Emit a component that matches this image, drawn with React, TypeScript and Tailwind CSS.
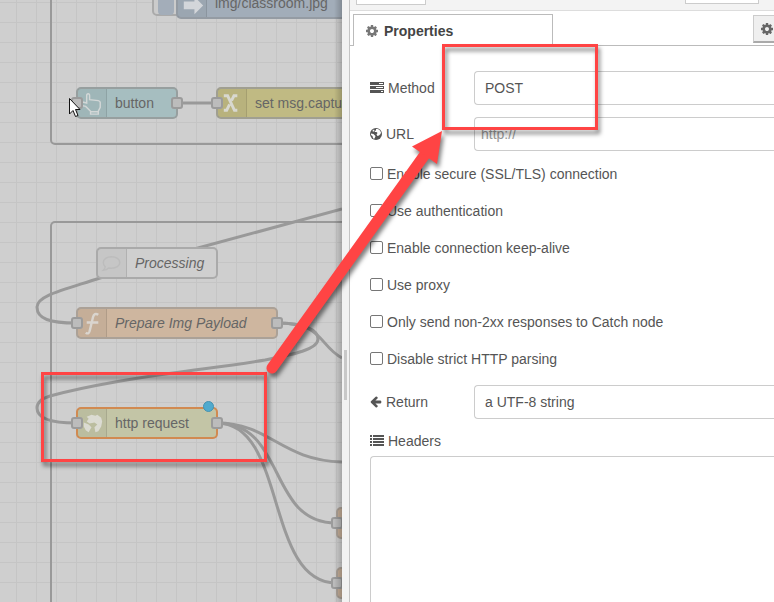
import type { ReactNode } from "react";

const COG =
  "M1024 896q0-106-75-181t-181-75-181 75-75 181 75 181 181 75 181-75 75-181zm512-109v222q0 12-8 23t-20 13l-185 28q-19 54-39 91 35 50 107 138 10 12 10 25t-9 23q-27 37-99 108t-94 71q-12 0-26-9l-138-108q-44 23-91 38-16 136-29 186-7 28-36 28h-222q-14 0-24.5-8.5t-11.5-21.5l-28-184q-49-16-90-37l-141 107q-10 9-25 9-14 0-25-11-126-114-165-168-7-10-7-23 0-12 8-23 15-21 51-66.5t54-70.5q-27-50-41-99l-183-27q-13-2-21-12.5t-8-23.5v-222q0-12 8-23t19-13l186-28q14-46 39-92-40-57-107-138-10-12-10-24 0-10 9-23 26-36 98.5-107.5t94.5-71.5q13 0 26 10l138 107q44-23 91-38 16-136 29-186 7-28 36-28h222q14 0 24.5 8.5t11.5 21.5l28 184q49 16 90 37l142-107q9-9 24-9 13 0 25 10 129 119 165 170 7 8 7 22 0 12-8 23-15 21-51 66.5t-54 70.5q26 50 41 98l183 28q13 2 21 12.5t8 23.5z";

function CogIcon({ className }: { className: string }) {
  return (
    <svg viewBox="0 128 1536 1536" className={className} fill="currentColor" aria-hidden="true">
      <path d={COG} />
    </svg>
  );
}

function TasksIcon() {
  return (
    <svg viewBox="0 0 14 12" className="h-3 w-3.5 shrink-0" fill="currentColor" fillRule="evenodd" aria-hidden="true">
      <path d="M0 0h14v3H0zM9 1h4v1H9zM0 4h14v3H0zM6 5h7v1H6zM0 8h14v3H0zM11 9h2v1h-2z" />
    </svg>
  );
}

function ListIcon() {
  return (
    <svg viewBox="0 0 14 12" className="h-3 w-3.5 shrink-0" fill="currentColor" aria-hidden="true">
      <path d="M0 0h2v2H0zM3 0h11v2H3zM0 3h2v2H0zM3 3h11v2H3zM0 6h2v2H0zM3 6h11v2H3zM0 9h2v2H0zM3 9h11v2H3z" />
    </svg>
  );
}

function GlobeIcon() {
  return (
    <svg viewBox="0 0 24 24" className="size-3 shrink-0" aria-hidden="true">
      <circle cx="12" cy="12" r="12" fill="#555" />
      <path d="M12 2l4 0 4 3 2 4-1 3-3 3-3 1-2-3 2-3-2-2-3 0-1-2 3-1z" fill="#fff" />
      <path d="M2 11l5 1 4 4-1 3-2 3-2-2-1-4-3-2z" fill="#fff" />
      <path d="M5 5l3-2 1 2-3 3z" fill="#fff" />
    </svg>
  );
}

function ArrowLeftIcon() {
  return (
    <svg viewBox="0 128 1600 1664" className="size-3 shrink-0" fill="currentColor" aria-hidden="true">
      <path d="M1536 896v128q0 53-32.5 90.5t-84.5 37.5h-704l293 294q38 36 38 90t-38 90l-75 76q-37 37-90 37-52 0-91-37l-651-652q-37-37-37-90 0-52 37-91l651-650q38-38 91-38 52 0 90 38l75 74q38 38 38 91t-38 91l-293 293h704q52 0 84.5 37.5t32.5 90.5z" />
    </svg>
  );
}

/* Glyphs shown in the icon strip of each flow node */
const glyph = {
  hand: (
    <path
      d="M8 14V8q0-2 1.500-2T11 8v4l9 1q2 .5 2 2v5l-2 4v3h-8v-3L7 19l-5-1q-2-1.500-.5-3L4 14.500l4 1zM12 24.500h8"
      transform="translate(1 -1)"
      fill="none"
      stroke="#d3d7d7"
      strokeWidth="1.500"
    />
  ),
  change: (
    <path
      d="M6 7h4l7 15h3M6 22h3l3-6M14 12l2.500-5H20"
      fill="none"
      stroke="#d8d8d0"
      strokeWidth="3"
    />
  ),
  inject: <path d="M6 13h11V8l9 9-9 9v-5H6zM6 7h11v3H6z" fill="#d3d6da" />,
  comment: (
    <path
      d="M14 8c5 0 8.500 2.500 8.500 6s-3.500 6-8.500 6l-3-.4q-2 2-5.500 2.400 1.500-1.500 2-3.500Q5.500 16.500 5.500 14c0-3.500 3.500-6 8.500-6z"
      fill="none"
      stroke="#bcbcbc"
      strokeWidth="1.500"
    />
  ),
  func: (
    <path
      d="M21 6q-4-2.500-5.500 2.500L12 23q-1 3.500-4 1.500M9 14h12"
      fill="none"
      stroke="#dad5cf"
      strokeWidth="2.500"
    />
  ),
  globe: (
    <path
      d="M9 8l5-2 4 1 2-1 4 3 1 4-1 5-3 5-3 1-1-5 3-3-3-2-5 1-3-2 2-3zM6 14l5 2 3 3-3 5-3-2-2-4z"
      fill="#dbdbd2"
    />
  ),
};

function Port({ className }: { className: string }) {
  return <span className={`absolute size-3 rounded-[3px] border-2 border-[#9b9b9b] bg-[#bcbcbc] ${className}`} />;
}

type NodeProps = {
  place: string;
  tone: string;
  icon?: ReactNode;
  label?: string;
  input?: boolean;
  output?: boolean;
  children?: ReactNode;
};

function FlowNode({ place, tone, icon, label, input, output, children }: NodeProps) {
  return (
    <div className={`absolute flex h-8 items-stretch rounded-[5px] border-2 ${place} ${tone}`}>
      <div className="w-[29px] shrink-0 border-r border-black/10 bg-black/4">
        <svg viewBox="0 0 30 30" className="size-[29px]" aria-hidden="true">
          {icon}
        </svg>
      </div>
      <span className="self-center pl-2 text-sm whitespace-nowrap text-[#666]">{label}</span>
      {input && <Port className="top-2 -left-[7px]" />}
      {output && <Port className="top-2 -right-[7px]" />}
      {children}
    </div>
  );
}

function Workspace() {
  return (
    <main className="relative w-[342px] shrink-0 overflow-hidden bg-[#cfcfcf]">
      <svg className="absolute inset-0 size-full" aria-hidden="true">
        <defs>
          <pattern id="grid" x="16" y="2" width="20" height="20" patternUnits="userSpaceOnUse">
            <path d="M.5 0v20M0 .5h20" stroke="#c5c5c5" />
          </pattern>
        </defs>
        <rect width="100%" height="100%" fill="url(#grid)" />
        <g fill="none" stroke="#999" strokeWidth="2">
          <rect x="51" y="-60" width="500" height="204" rx="4" />
          <rect x="51" y="222" width="500" height="500" rx="4" />
        </g>
        <g fill="none" stroke="#999" strokeWidth="3">
          <path d="M177 103H217" />
          <path d="M342 209L198 248L100 278C60 291 37 296 37 307C37 319 50 323 76 323" />
          <path d="M277 323C305 323 318 330 318 339C318 350 290 355 265 360C230 366 200 369 173 373C150 376 90 385 50 396C40 399 37 403 37 408C37 418 50 423 76 423" />
          <path d="M277 323C324 323 318 345 342 358" />
          <path d="M217 423C270 423 280 460 342 462" />
          <path d="M217 423C287 423 267 523 336 523" />
          <path d="M217 423C287 423 265 583 336 583" />
        </g>
      </svg>

      <div className="absolute -top-4 left-[152px] h-8 w-10 rounded-[5px] border-2 border-[#aaa] bg-[#cbcbcb] p-1">
        <div className="h-[25px] w-4 rounded-[4px] bg-[#a3adb9]" />
      </div>
      <FlowNode place="-top-[13px] left-[176px] w-60" tone="border-[#949ba3] bg-[#a2adb9]" icon={glyph.inject} label="img/classroom.jpg" />
      <FlowNode place="top-[87px] left-[76px] w-[102px]" tone="border-[#979f9f] bg-[#a6bec0]" icon={glyph.hand} label="button" input output />
      <FlowNode place="top-[87px] left-[216px] w-60" tone="border-[#a09f91] bg-[#c0ba83]" icon={glyph.change} label="set msg.capture" input />
      <FlowNode place="top-[247px] left-[96px] w-[122px] italic" tone="border-[#aaa] bg-[#cfcfcf]" icon={glyph.comment} label="Processing" />
      <FlowNode place="top-[307px] left-[76px] w-[202px] italic" tone="border-[#aba197] bg-[#ceb69f]" icon={glyph.func} label="Prepare Img Payload" input output />
      <FlowNode place="top-[407px] left-[76px] w-[142px]" tone="border-[#d18a51] bg-[#c3c5a6]" icon={glyph.globe} label="http request" input output>
        <span className="absolute -top-2 right-[2px] size-[11px] rounded-full border border-[#4692b0] bg-[#50aace]" />
      </FlowNode>
      <FlowNode place="top-[507px] left-[336px] w-40" tone="border-[#aba197] bg-[#ceb69f]" input />
      <FlowNode place="top-[567px] left-[336px] w-40" tone="border-[#aba197] bg-[#ceb69f]" input />

      <div className="absolute inset-y-0 right-0 w-2 bg-gradient-to-r from-transparent to-black/20" />
      <svg viewBox="0 0 14 21" className="absolute top-[97px] left-[68px] h-[21px] w-3.5" aria-hidden="true">
        <path d="M1.500 1.500v15.500l3.500-3.500 2.500 6 2.500-1-2.500-6H12z" fill="#fff" stroke="#111" />
      </svg>
    </main>
  );
}

function CheckRow({ id, label }: { id: string; label: string }) {
  return (
    <div className="flex h-[37px] items-center">
      <input id={id} type="checkbox" className="m-0 size-[13px] appearance-none rounded-[2px] border border-[#767676] bg-white" />
      <label htmlFor={id} className="pl-1 leading-5">
        {label}
      </label>
    </div>
  );
}

const options = [
  ["tls", "Enable secure (SSL/TLS) connection"],
  ["auth", "Use authentication"],
  ["keepalive", "Enable connection keep-alive"],
  ["proxy", "Use proxy"],
  ["errors", "Only send non-2xx responses to Catch node"],
  ["parsing", "Disable strict HTTP parsing"],
];

const labelClass = "flex w-[104px] shrink-0 items-center gap-1";
const fieldClass = "h-[34px] min-w-0 flex-1 appearance-none rounded-l border border-r-0 border-[#ccc] bg-white text-[#555] outline-none";

function EditPanel() {
  return (
    <section className="flex min-w-0 flex-1 flex-col overflow-hidden border-l border-[#c4c4c4] bg-white text-sm text-[#555]">
      <div className="flex h-[11px] shrink-0 items-start justify-between border-b border-[#ddd] bg-[#f3f3f3] pr-[15px] pl-1.5">
        <button aria-label="Delete" className="h-[5px] w-[70px] border border-t-0 border-[#ccc] bg-white" />
        <button aria-label="Cancel" className="h-1 w-[74px] border border-t-0 border-[#ccc] bg-white" />
      </div>

      <div className="flex h-[35px] shrink-0 items-end">
        <span className="w-[3px] border-b border-[#bbb]" />
        <h2 className="flex h-8 w-[200px] items-center gap-1.5 border border-b-0 border-[#bbb] pl-3 font-bold text-[#444]">
          <CogIcon className="size-3 text-[#777]" />
          Properties
        </h2>
        <div className="flex h-[35px] flex-1 items-start justify-end border-b border-[#bbb] pt-1">
          <button aria-label="Node settings" className="flex h-7 w-[21px] items-center border border-r-0 border-b-2 border-[#ccc] border-b-[#aaa] bg-[#efefef] pl-[7px]">
            <CogIcon className="size-3 shrink-0 text-[#666]" />
          </button>
        </div>
      </div>

      <form className="flex flex-1 flex-col pt-[25px] pl-5">
        <div className="flex items-center">
          <label htmlFor="method" className={labelClass}>
            <TasksIcon />
            Method
          </label>
          <select id="method" className={`${fieldClass} px-2.5`}>
            <option>POST</option>
          </select>
        </div>
        <div className="mt-3 flex items-center">
          <label htmlFor="url" className={labelClass}>
            <GlobeIcon />
            URL
          </label>
          <input id="url" placeholder="http://" className={`${fieldClass} px-1.5 placeholder:text-[#999]`} />
        </div>
        <div className="pt-1">
          {options.map(([id, label]) => (
            <CheckRow key={id} id={id} label={label} />
          ))}
        </div>
        <div className="mt-2 flex items-center">
          <label htmlFor="return" className={labelClass}>
            <ArrowLeftIcon />
            Return
          </label>
          <select id="return" className={`${fieldClass} px-2.5`}>
            <option>a UTF-8 string</option>
          </select>
        </div>
        <label htmlFor="headers" className="mt-3 flex h-5 items-center gap-1">
          <ListIcon />
          Headers
        </label>
        <textarea id="headers" className="mt-[5px] min-h-36 flex-1 resize-none rounded-tl border border-r-0 border-b-0 border-[#ccc] outline-none" />
      </form>
    </section>
  );
}

function Annotations() {
  return (
    <svg
      className="pointer-events-none absolute inset-0 size-full [&>*]:drop-shadow-[2px_4px_2px_rgba(0,0,0,0.5)]"
      aria-hidden="true"
    >
      <rect x="443.500" y="45.500" width="153" height="83" fill="none" stroke="#ff4444" strokeWidth="3" />
      <rect x="42.500" y="373.500" width="223" height="87" fill="none" stroke="#ff4444" strokeWidth="3" />
      <g fill="#ff4444">
        <path d="M272 368L426 153" stroke="#ff4444" strokeWidth="11" strokeLinecap="round" />
        <path d="M442 131L437 164L412 146.500Z" />
      </g>
    </svg>
  );
}

export default function App() {
  return (
    <div className="relative flex h-screen overflow-hidden font-['Liberation_Sans',Arial,sans-serif]">
      <Workspace />
      <div className="flex w-[7px] shrink-0 items-center justify-center bg-[#f2f2f2] pt-[148px]">
        <span className="h-[50px] w-[3px] bg-[#c8c8c8]" />
      </div>
      <EditPanel />
      <Annotations />
    </div>
  );
}
